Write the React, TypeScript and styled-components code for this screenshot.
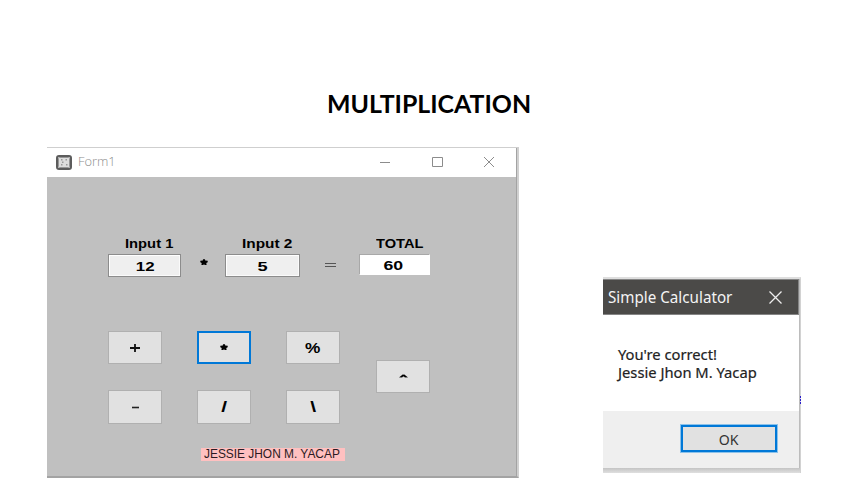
import React from 'react';
import styled, { createGlobalStyle } from 'styled-components';

const GlobalStyle = createGlobalStyle`
  * { box-sizing: border-box; }
  body { margin: 0; background: #fff; overflow: hidden; }
`;

const Page = styled.main`
  width: 851px;
  height: 499px;
  padding-top: 88px;
  background: #fff;
  font-family: 'Liberation Sans', Arial, sans-serif;
  color: #000;
`;

const Heading = styled.h1`
  margin: 0 0 0 327px;
  height: 59px;
  font: 700 24px/32px Lato, 'Open Sans', sans-serif;
`;

const Text = styled.span<{ $x?: number; $origin?: string }>`
  display: inline-block;
  white-space: nowrap;
  transform: scaleX(${(p) => p.$x ?? 1});
  transform-origin: ${(p) => p.$origin ?? 'center'} center;
`;

const Windows = styled.div`
  display: flex;
  align-items: flex-start;
  padding-left: 47px;
  gap: 84px;
`;

const FormWindow = styled.section`
  width: 472px;
  height: 331px;
  border-top: 1px solid #cfcfcf;
  border-right: 2px solid #d0d0d0;
  border-bottom: 2px solid #a3a3a3;
`;

const FormInner = styled.div`
  height: 100%;
  border-right: 1px solid #a3a3a3;
  background: #c0c0c0;
`;

const TitleBar = styled.header`
  display: flex;
  align-items: center;
  height: 29px;
  padding: 0 22px 1px 9px;
  background: #fff;
  color: #8c8c8c;
  font: 300 12px/28px 'Open Sans', sans-serif;

  svg { display: block; }
`;

const FormTitle = styled.div`
  flex: 1;
  margin-left: 6px;
`;

const Controls = styled.div`
  display: flex;
  align-items: center;
  gap: 41px;
`;

const FormBody = styled.div`
  padding: 57px 0 0 61px;
`;

const Equation = styled.div`
  display: grid;
  grid-template-columns: 73px 44px 75px 59px 71px;
  grid-template-rows: 20px 23px;
  font-weight: 700;
  font-size: 12.5px;
`;

const Label = styled.label`
  padding-left: 17px;
  line-height: 20px;
  white-space: nowrap;
`;

const Cell = styled.div`
  display: flex;
  align-items: center;
  justify-content: center;
`;

const Operator = styled(Cell)<{ $lift: number }>`
  padding: 0 0 ${(p) => p.$lift}px 1px;
`;

const Field = styled(Cell)<{ $result?: boolean }>`
  height: ${(p) => (p.$result ? 21 : 23)}px;
  padding: ${(p) => (p.$result ? '2px 2px 0 0' : '2px 0 0 1px')};
  border: 1px solid;
  border-color: ${(p) => (p.$result ? '#a8a8a8 #fff #fff #a8a8a8' : '#8c8c8c')};
  box-shadow: ${(p) => (p.$result ? 'none' : 'inset 1px 1px 0 #fff, inset -1px -1px 0 #fafafa')};
  background: ${(p) => (p.$result ? '#fff' : '#efefef')};
  font-size: 13px;
`;

const Keypad = styled.div`
  display: flex;
  align-items: center;
  gap: 36px;
  margin-top: 54px;
`;

const Keys = styled.div`
  display: grid;
  grid-template-columns: repeat(3, 54px);
  grid-template-rows: 33px 34px;
  column-gap: 35px;
  row-gap: 26px;
`;

const Key = styled.button<{ $active?: boolean }>`
  display: flex;
  align-items: center;
  justify-content: center;
  width: 54px;
  height: 100%;
  padding: 0;
  border: ${(p) => (p.$active ? '2px solid #0078d7' : '1px solid #b0b0b0')};
  background: #e1e1e1;
  font: 700 15px/16px 'Liberation Sans', Arial, sans-serif;
  color: #000;

  svg { display: block; }
`;

const PowerKey = styled(Key)`
  height: 33px;
  margin-bottom: 2px;
  padding-bottom: 1px;
`;

const NameTag = styled.div`
  display: flex;
  align-items: center;
  width: 144px;
  height: 13px;
  margin: 24px 0 0 93px;
  padding-left: 3px;
  background: #ffc0c0;
  font-size: 12px;
  line-height: 13px;
  color: #2b1a22;
`;

const DialogShadow = styled.section`
  width: 198px;
  height: 196px;
  margin-top: 130px;
  border-top: 2px solid #dedede;
  border-right: 1px solid #d2d2d2;
  background: linear-gradient(#c4c4c4, #dfdfdf) bottom / 100% 5px no-repeat;
`;

const Dialog = styled.div`
  height: 189px;
  border-right: 1px solid #bcbcbc;
  background: #fff;
  font-family: 'Noto Sans', 'Open Sans', sans-serif;
`;

const DialogBar = styled.header`
  display: flex;
  align-items: center;
  justify-content: space-between;
  height: 36px;
  padding: 0 16px 0 5px;
  border: 1px solid #858585;
  border-left: 0;
  background: #4b4a48;
  color: #f4f4f4;
  font-size: 15.5px;
  line-height: 34px;
`;

const Message = styled.div`
  height: 96px;
  padding: 31px 0 0 15px;
  font-size: 15px;
  line-height: 17.5px;
  color: #222;
  -webkit-text-stroke: 0.2px #222;
`;

const DialogFooter = styled.footer`
  display: flex;
  justify-content: flex-end;
  height: 57px;
  padding: 13px 21px 0 0;
  background: #efefef;
`;

const OkButton = styled.button`
  width: 98px;
  height: 29px;
  padding: 0;
  border: 3px solid #0078d7;
  outline: 1px solid #8cc2ea;
  outline-offset: -1px;
  background: #e1e1e1;
  font: 15px/22px 'Noto Sans', 'Open Sans', sans-serif;
  color: #333;
`;

const EdgeMarks = styled.i`
  width: 1px;
  height: 8px;
  margin: 249px 0 0 -85px;
  background: repeating-linear-gradient(#2a20c8 0 2px, #d6d2f0 2px 3px);
`;

const AppIcon = () => (
  <svg width="16" height="15" viewBox="0 0 16 15">
    <rect x="1" y="1" width="14" height="13" rx="2" fill="#dedede" stroke="#5c5c5c" strokeWidth="2" />
    <rect x="2.5" y="2.5" width="11" height="10" rx="1" fill="none" stroke="#969696" />
    <g fill="#999">
      <rect x="5" y="4" width="1.5" height="1.5" />
      <rect x="9.5" y="4" width="1.5" height="1.5" />
      <rect x="6" y="6.5" width="1.5" height="1.5" />
      <rect x="5" y="9" width="1.5" height="1.5" />
      <rect x="10" y="9" width="1.5" height="1.5" />
    </g>
  </svg>
);

const Star = () => (
  <svg width="8" height="7" viewBox="0 0 8 7">
    <path d="M3 .3H5L5.2 1.5 7.7 1.7V3.2L6.3 4 6.6 6H4.8L4 5.3 3.2 6H1.4L1.7 4 .3 3.2V1.7L2.8 1.5Z" fill="#000" />
  </svg>
);

export default function App() {
  return (
    <>
      <GlobalStyle />
      <Page>
        <Heading><Text $x={1.036} $origin="left">MULTIPLICATION</Text></Heading>
        <Windows>
          <FormWindow>
            <FormInner>
              <TitleBar>
                <AppIcon />
                <FormTitle><Text $x={1.07} $origin="left">Form1</Text></FormTitle>
                <Controls>
                  <svg width="11" height="11"><path d="M0 5.5H10" stroke="#8c8c8c" /></svg>
                  <svg width="11" height="11"><path d="M.5.5H10.5V9.5H.5Z" fill="none" stroke="#8c8c8c" /></svg>
                  <svg width="10" height="10"><path d="M0 0 10 10M10 0 0 10" stroke="#8c8c8c" /></svg>
                </Controls>
              </TitleBar>
              <FormBody>
                <Equation>
                  <Label><Text $x={1.18} $origin="left">Input 1</Text></Label>
                  <span />
                  <Label><Text $x={1.23} $origin="left">Input 2</Text></Label>
                  <span />
                  <Label><Text $x={1.17} $origin="left">TOTAL</Text></Label>
                  <Field><Text $x={1.3}>12</Text></Field>
                  <Operator $lift={6}><Star /></Operator>
                  <Field><Text $x={1.4}>5</Text></Field>
                  <Operator $lift={2}>
                    <svg width="11" height="6"><path d="M0 1.5H11M0 4.5H11" stroke="#555" /></svg>
                  </Operator>
                  <Field $result><Text $x={1.36}>60</Text></Field>
                </Equation>
                <Keypad>
                  <Keys>
                    <Key><svg width="10" height="8"><path d="M0 4H10M5 0V8" stroke="#111" strokeWidth="1.8" /></svg></Key>
                    <Key $active><Star /></Key>
                    <Key><Text $x={1.15}>%</Text></Key>
                    <Key><svg width="7" height="3"><path d="M0 1.5H7" stroke="#222" strokeWidth="1.6" /></svg></Key>
                    <Key><Text $x={1.4}>/</Text></Key>
                    <Key><Text $x={1.4}>\</Text></Key>
                  </Keys>
                  <PowerKey><svg width="9" height="4"><path d="M.5 3.3 3.5.8H5.5L8.5 3.3H6L4.5 2.2 3 3.3Z" fill="#000" stroke="#000" strokeWidth=".3" /></svg></PowerKey>
                </Keypad>
                <NameTag><Text $x={0.992} $origin="left">JESSIE JHON M. YACAP</Text></NameTag>
              </FormBody>
            </FormInner>
          </FormWindow>
          <DialogShadow>
            <Dialog>
              <DialogBar>
                <Text $x={0.98} $origin="left">Simple Calculator</Text>
                <svg width="13" height="13"><path d="M.5.5 12.5 12.5M12.5.5.5 12.5" stroke="#eee" strokeWidth="1.3" /></svg>
              </DialogBar>
              <Message>
                <Text $x={0.982} $origin="left">You're correct!<br />Jessie Jhon M. Yacap</Text>
              </Message>
              <DialogFooter><OkButton><Text $x={0.94}>OK</Text></OkButton></DialogFooter>
            </Dialog>
          </DialogShadow>
          <EdgeMarks />
        </Windows>
      </Page>
    </>
  );
}
